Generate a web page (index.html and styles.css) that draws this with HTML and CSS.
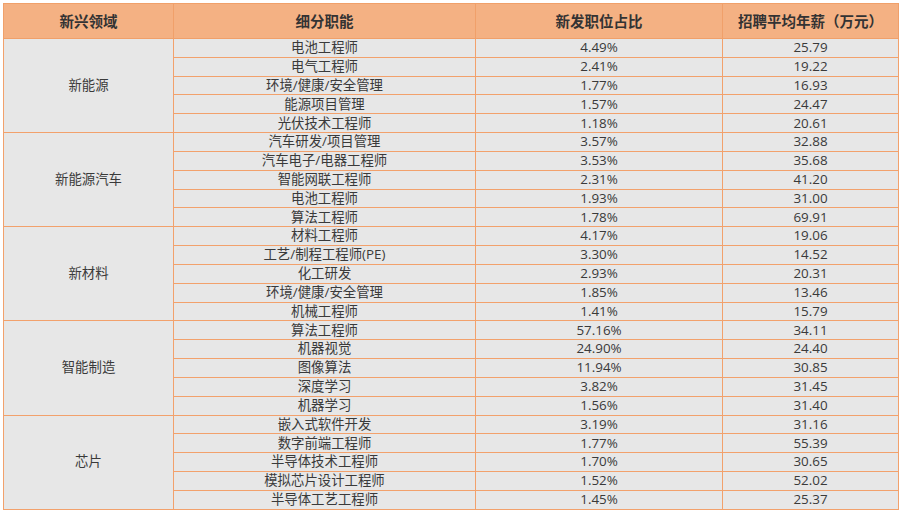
FILE: index.html
```html
<!DOCTYPE html>
<html lang="zh-CN">
<head>
<meta charset="utf-8">
<title>新兴领域职能</title>
<link rel="stylesheet" href="styles.css">
</head>
<body>
<table class="jobs">
  <colgroup>
    <col class="c1"><col class="c2"><col class="c3"><col class="c4">
  </colgroup>
  <thead>
    <tr><th>新兴领域</th><th>细分职能</th><th>新发职位占比</th><th>招聘平均年薪（万元）</th></tr>
  </thead>
  <tbody>
    <tr><td rowspan="5" class="grp">新能源</td><td>电池工程师</td><td>4.49%</td><td>25.79</td></tr>
    <tr><td>电气工程师</td><td>2.41%</td><td>19.22</td></tr>
    <tr><td>环境/健康/安全管理</td><td>1.77%</td><td>16.93</td></tr>
    <tr><td>能源项目管理</td><td>1.57%</td><td>24.47</td></tr>
    <tr><td>光伏技术工程师</td><td>1.18%</td><td>20.61</td></tr>
    <tr><td rowspan="5" class="grp">新能源汽车</td><td>汽车研发/项目管理</td><td>3.57%</td><td>32.88</td></tr>
    <tr><td>汽车电子/电器工程师</td><td>3.53%</td><td>35.68</td></tr>
    <tr><td>智能网联工程师</td><td>2.31%</td><td>41.20</td></tr>
    <tr><td>电池工程师</td><td>1.93%</td><td>31.00</td></tr>
    <tr><td>算法工程师</td><td>1.78%</td><td>69.91</td></tr>
    <tr><td rowspan="5" class="grp">新材料</td><td>材料工程师</td><td>4.17%</td><td>19.06</td></tr>
    <tr><td>工艺/制程工程师(PE)</td><td>3.30%</td><td>14.52</td></tr>
    <tr><td>化工研发</td><td>2.93%</td><td>20.31</td></tr>
    <tr><td>环境/健康/安全管理</td><td>1.85%</td><td>13.46</td></tr>
    <tr><td>机械工程师</td><td>1.41%</td><td>15.79</td></tr>
    <tr><td rowspan="5" class="grp">智能制造</td><td>算法工程师</td><td>57.16%</td><td>34.11</td></tr>
    <tr><td>机器视觉</td><td>24.90%</td><td>24.40</td></tr>
    <tr><td>图像算法</td><td>11.94%</td><td>30.85</td></tr>
    <tr><td>深度学习</td><td>3.82%</td><td>31.45</td></tr>
    <tr><td>机器学习</td><td>1.56%</td><td>31.40</td></tr>
    <tr><td rowspan="5" class="grp">芯片</td><td>嵌入式软件开发</td><td>3.19%</td><td>31.16</td></tr>
    <tr><td>数字前端工程师</td><td>1.77%</td><td>55.39</td></tr>
    <tr><td>半导体技术工程师</td><td>1.70%</td><td>30.65</td></tr>
    <tr><td>模拟芯片设计工程师</td><td>1.52%</td><td>52.02</td></tr>
    <tr><td>半导体工艺工程师</td><td>1.45%</td><td>25.37</td></tr>
  </tbody>
</table>
</body>
</html>
```

FILE: styles.css
```css
html, body {
  margin: 0;
  padding: 0;
  background: #ffffff;
}

body {
  padding: 3px 0 0 3px;
  font-family: "Open Sans", "Noto Sans CJK SC", sans-serif;
  color: #3a3a3a;
}

.jobs {
  border-collapse: collapse;
  table-layout: fixed;
  width: 895px;
  background: #e7e7e7;
  border: 1.5px solid #f6b48a;
}

.c1 { width: 170px; }
.c2 { width: 302px; }
.c3 { width: 247px; }
.c4 { width: 176px; }

.jobs th,
.jobs td {
  border: 1px solid #f2a16c;
  text-align: center;
  vertical-align: middle;
  padding: 0;
  white-space: nowrap;
  line-height: 1;
}

.jobs thead th {
  height: 34px;
  background: #f4b183;
  font-family: "Noto Sans CJK SC", sans-serif;
  font-weight: 700;
  font-size: 14.5px;
  color: #333333;
  border-color: #f0a06a;
}

.jobs tbody td {
  height: 17.84px;
  font-size: 13.4px;
}

.jobs tbody td.grp {
  font-size: 13.4px;
}
```
